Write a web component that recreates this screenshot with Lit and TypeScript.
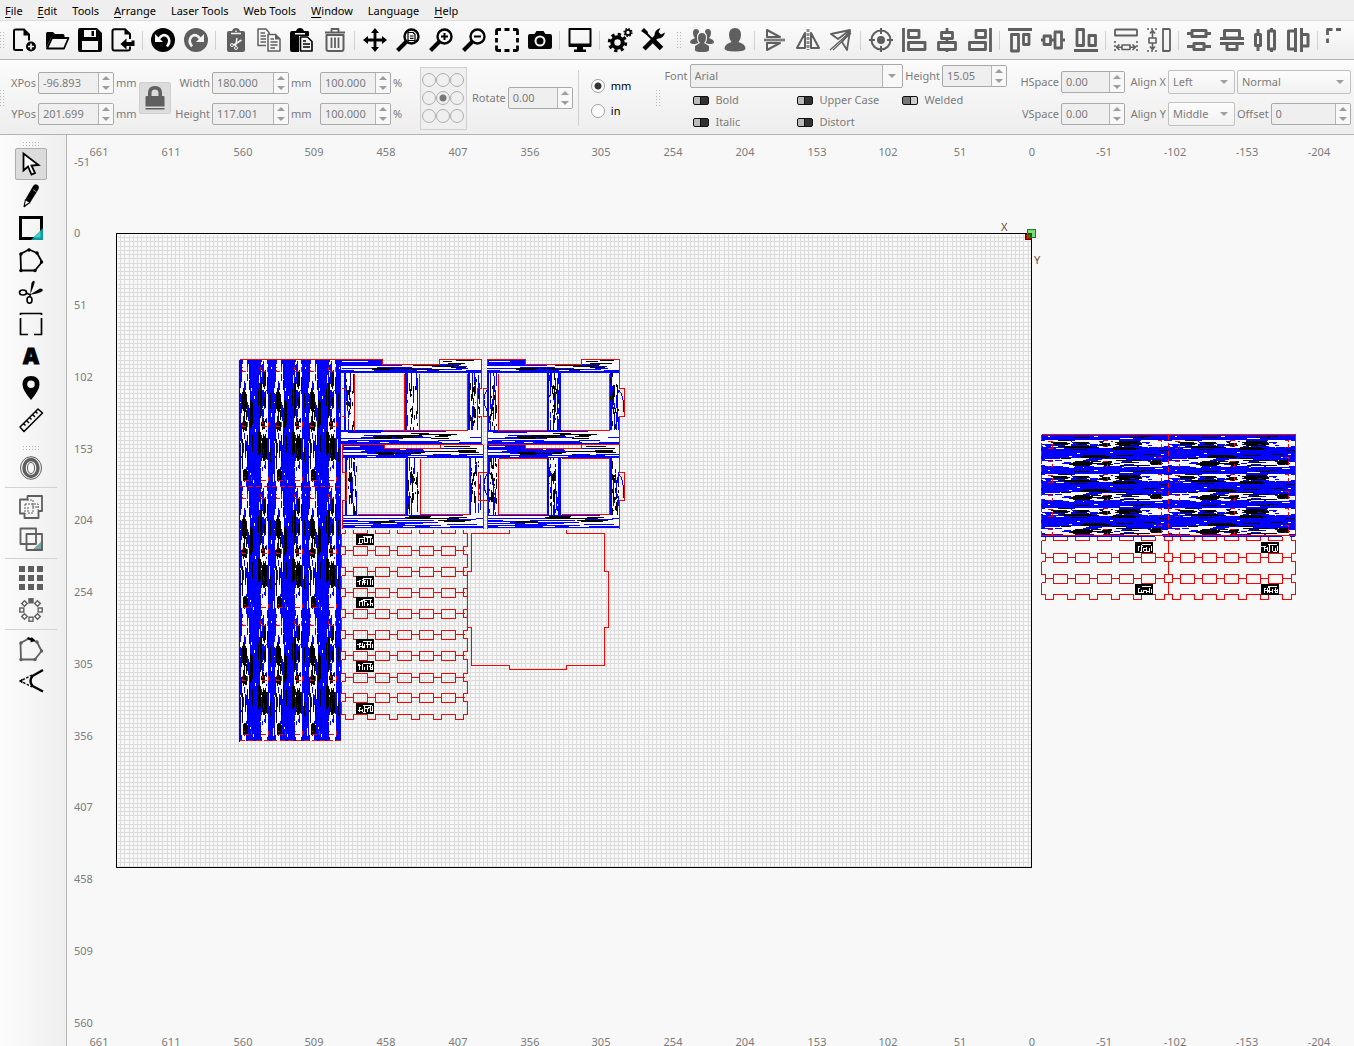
import { LitElement, html, svg, css, nothing } from "lit";
import { customElement, property } from "lit/decorators.js";

/* ---------- icons, each on a 24 x 24 grid ---------- */

const line = (d: string, w = 2) =>
  svg`<path d=${d} fill="none" stroke="currentColor" stroke-width=${w} stroke-linejoin="round"/>`;
const solid = (d: string) => svg`<path d=${d} fill="currentColor" fill-rule="evenodd"/>`;
const lens = (inner: unknown) => svg`
  <circle cx="15.5" cy="8.5" r="7" fill="none" stroke="currentColor" stroke-width="2.4"/>
  <path d="M10.5 13.5L1.5 22.5" stroke="currentColor" stroke-width="4"/>${inner}`;

const icons: Record<string, unknown> = {
  newFile: svg`${line("M11 22H3.500Q2 22 2 20.500V3Q2 1.500 3.500 1.500H12L17 6.500V12.500")}${solid("M11.500 1V7.500H18Z")}
    <circle cx="19" cy="18.500" r="5" fill="currentColor"/><path d="M19 15.500V21.500M16 18.500H22" stroke="#fff" stroke-width="1.600"/>`,
  open: svg`${solid("M1 20V5.500Q1 4 2.500 4H8L10 6H18Q19.500 6 19.500 7.500V9H6.500Z")}${line("M2 20.500L7 10H23.500L19 20.500Z", 1.8)}`,
  save: svg`${solid("M2 0H19L24 5V22Q24 24 22 24H2Q0 24 0 22V2Q0 0 2 0ZM6 2V9H18V2ZM4 13V22H20V13Z")}<rect x="13.500" y="3" width="2.500" height="5" fill="currentColor"/>`,
  importFile: svg`${line("M19 18.500V20.500Q19 22.500 17 22.500H3.500Q1.500 22.500 1.500 20.500V3Q1.500 1.200 3.500 1.200H14L19 6V11")}${solid("M13.500 1V6.500H19Z")}${solid("M9.500 16L15.500 10.500V14H20.500V12.500H23.500V18H15.500V21.500Z")}`,
  undo: svg`<circle cx="12" cy="12" r="12" fill="currentColor"/><path d="M8 10.500Q12 5 16.500 8.500Q20.500 13 16 18.500" fill="none" stroke="#fafafa" stroke-width="2.600"/><path d="M4 6V14H12Z" fill="#fafafa"/>`,
  redo: svg`<circle cx="12" cy="12" r="12" fill="currentColor"/><path d="M16 10.500Q12 5 7.500 8.500Q3.500 13 8 18.500" fill="none" stroke="#f4f4f4" stroke-width="2.600"/><path d="M20 6V14H12Z" fill="#f4f4f4"/>`,
  cut: svg`${solid("M5 3H8Q9 0 12 0Q15 0 16 3H19Q21 3 21 5V22Q21 24 19 24H5Q3 24 3 22V5Q3 3 5 3Z")}
    <path d="M7 5.500H17M12 2.500V4M13 10L11.500 18M17.500 12L9 17.500" stroke="#f4f4f4" stroke-width="1.500"/><circle cx="8" cy="17" r="1.500" fill="none" stroke="#f4f4f4"/><circle cx="12" cy="20" r="1.500" fill="none" stroke="#f4f4f4"/>`,
  copy: svg`${line("M9 17.500H1V1H9L12 4.500V7", 1.5)}${line("M11 6.500H18.500L23 11V23H11Z", 1.5)}${line("M3.500 5H8M3.500 8H9M3.500 11H9M3.500 14H9M13.500 11H17M13.500 14H20.500M13.500 17H20.500M13.500 20H18", 1.3)}${solid("M18 6V11.500H23Z")}`,
  paste: svg`${solid("M2 3H6Q7 0 10 0Q13 0 14 3H18Q19 3 19 5V8H9V24H2Q0 24 0 22V5Q0 3 2 3ZM5 5V6.500H15V5Z")}${line("M10.500 9H17.500L22 13.500V23H10.500Z", 1.6)}${line("M13 13H16M13 16H20M13 19H20", 1.4)}`,
  trash: svg`${line("M3.500 7H20.500V21Q20.500 23 18.500 23H5.500Q3.500 23 3.500 21Z", 2)}${line("M8.500 9.500V20M12 9.500V20M15.500 9.500V20", 1.8)}${line("M2 4.500H22M8.500 4V1H15.500V4", 1.8)}`,
  move: solid("M12 0L16 5H13.400V10.600H19V8L24 12L19 16V13.400H13.400V19H16L12 24L8 19H10.600V13.400H5V16L0 12L5 8V10.600H10.600V5H8Z"),
  zoomPage: lens(line("M12 4.500H17L19 6.500V12.500H12ZM14 8H17.500M14 10.300H17.500", 1.2)),
  zoomIn: lens(line("M15.500 5V12M12 8.500H19", 2)),
  zoomOut: lens(line("M12 8.500H19", 2)),
  frame: line("M1.500 7V3Q1.500 1.500 3 1.500H6M9.500 1.500H14.500M18 1.500H21Q22.500 1.500 22.500 3V7M22.500 10V14.500M22.500 17.500V21Q22.500 22.500 21 22.500H18M14.500 22.500H9.500M6 22.500H3Q1.500 22.500 1.500 21V17.500M1.500 14.500V10", 2.8),
  camera: solid("M2 6H6.500L8.500 3H15.500L17.500 6H22Q24 6 24 8V19Q24 21 22 21H2Q0 21 0 19V8Q0 6 2 6ZM12 7.500A5.500 5.500 0 1 0 12 18.500A5.500 5.500 0 1 0 12 7.500ZM12 9.500A3.500 3.500 0 1 1 12 16.500A3.500 3.500 0 1 1 12 9.500Z"),
  monitor: svg`${line("M1.500 1H22.500V18H1.500Z", 2)}${solid("M1 15.500H23V18.500H1ZM9 18H15V21.500H18V24H6V21.500H9Z")}`,
  gears: svg`<circle cx="9.500" cy="14.500" r="5.200" fill="none" stroke="currentColor" stroke-width="4"/><circle cx="9.500" cy="14.500" r="8.200" fill="none" stroke="currentColor" stroke-width="3" stroke-dasharray="3.200 3.240"/>
    <circle cx="20" cy="4.500" r="2.600" fill="none" stroke="currentColor" stroke-width="1.800"/><circle cx="20" cy="4.500" r="3.900" fill="none" stroke="currentColor" stroke-width="1.400" stroke-dasharray="1.500 1.560"/>`,
  tools: svg`${line("M3.500 3.500L12 12", 2)}${line("M13 13L20.500 20.500", 5)}${line("M3 21L17 7", 4.5)}${solid("M0 3L3 0L7 4L6 7Z")}${solid("M13.500 8Q13 2 19.500 0L17.500 4L20 6.500L24 4.500Q22.500 11 16 10.500Z")}`,
  group: svg`${solid("M12 5Q16 5 16 10Q16 13 14 15L19 18V22Q19 24 12 24Q5 24 5 22V18L10 15Q8 13 8 10Q8 5 12 5Z")}${solid("M6 1Q9 1 9 4Q7 6 7 10Q7 13 8.500 15L5 16Q0 16 0 14L1 12L5 10Q3 8 3 5Q3 1 6 1Z")}${solid("M18 1Q15 1 15 4Q17 6 17 10Q17 13 15.500 15L19 16Q24 16 24 14L23 12L19 10Q21 8 21 5Q21 1 18 1Z")}`,
  person: solid("M12 0Q18 0 18 7Q18 11 15.500 14Q22.500 16 22.500 20.500Q22.500 23.500 12 23.500Q1.500 23.500 1.500 20.500Q1.500 16 8.500 14Q6 11 6 7Q6 0 12 0Z"),
  flipV: svg`${line("M4 2V9L17 9ZM4 15V22L17 15Z", 2)}<path d="M1 12H22" stroke="currentColor" stroke-width="3" stroke-opacity="0.600"/>${line("M1 12H22", 1)}`,
  flipH: svg`${line("M9 5V20H1ZM15 5V20H23Z", 2)}<path d="M12 1V22" stroke="currentColor" stroke-width="3" stroke-opacity="0.700" stroke-dasharray="3 1"/>`,
  flipD: svg`${line("M21 2L2 6L9 11ZM21 3L18 22L13 14Z", 1.8)}${line("M1 22L20 5M4 22L22 5", 1.2)}`,
  target: svg`<circle cx="12" cy="12" r="9.500" fill="none" stroke="currentColor" stroke-width="2"/><circle cx="12" cy="12" r="4" fill="currentColor"/>${line("M12 0V6M12 18V24M0 12H6M18 12H24", 2)}`,
  alignL: line("M1.500 0V24M6.500 2.500H17V9.500H6.500ZM6.500 14.500H23V21.500H6.500Z", 2.8),
  alignC: line("M12 0V4M12 11V14M12 22V24M6.500 4.500H17.500V10.500H6.500ZM3.500 14.500H20.500V21.500H3.500Z", 2.8),
  alignR: line("M22.500 0V24M17.500 2.500H8V9.500H17.500ZM17.500 14.500H1.500V21.500H17.500Z", 2.8),
  alignT: line("M0 1.500H24M3.500 6.500H10.500V23H3.500ZM15.500 6.500H21V16.500H15.500Z", 2.8),
  alignM: line("M0 12H3M10 12H14M21 12H24M3 8H9.500V16.500H3ZM14 4H20.500V20H14Z", 2.8),
  alignB: line("M0 22.500H24M3 1.500H9.500V17.500H3ZM15 7.500H21.500V17.500H15Z", 2.8),
  sameW: svg`${line("M2 1.500H22Q23 1.500 23 2.500V7.500H1V2.500Q1 1.500 2 1.500Z", 1.8)}${line("M8 17H16V21.500H8ZM3 19.200H8M16 19.200H21M5.500 16.500L2.500 19.200L5.500 22M18.500 16.500L21.500 19.200L18.500 22", 1.6)}<path d="M1 13V24M23 13V24" stroke="currentColor" stroke-width="1.600" stroke-dasharray="2 2"/>`,
  sameH: svg`${line("M16 1H22Q23 1 23 2V22Q23 23 22 23H16Z", 1.8)}${line("M2 10H9V15H2ZM5.500 3V10M5.500 15V21M3 5.500L5.500 2.500L8 5.500M3 18.500L5.500 21.500L8 18.500", 1.6)}<path d="M0 1H11M0 23H11" stroke="currentColor" stroke-width="1.600" stroke-dasharray="2 2"/>`,
  distV: line("M5 2.500H19V8.500H5ZM7 15.500H17V21.500H7ZM0 5.500H5M19 5.500H24M0 18.500H7M17 18.500H24", 3),
  distV2: line("M4.500 2.500H19.500V10H4.500ZM7 16V21.500H17V16M0 10.500H24M0 15.500H24", 3),
  distH: line("M2.500 6.500H7.500V17.500H2.500ZM15.500 3H21.500V21H15.500ZM5 1V6M5 17V23M18.500 0V3M18.500 21V24", 3),
  distH2: line("M9 3H2.500V21H9M16 6.500H22V18H16M9.500 0V24M15.500 0V24", 3),
  corners: line("M1.500 15V10.500M1.500 7V1.500H6.500M10 1.500H15", 2.8),
  lock: solid("M5 10V7Q5 0 12 0Q19 0 19 7V10H20.500Q21.500 10 21.500 11V20.500H2.500V11Q2.500 10 3.500 10ZM8.500 10H15.500V7Q15.500 3.500 12 3.500Q8.500 3.500 8.500 7ZM2.500 22H21.500V23.500H2.500Z"),
  select: svg`<path d="M4.500 1.500V18.500L9 14.500L12.500 22.500L16 21L12.500 13.500L19.500 13Z" fill="#fff" stroke="currentColor" stroke-width="1.800"/>`,
  pencil: svg`${solid("M13.500 3Q15.500 -1 18.500 1Q21 2.500 19 6L11 19L6 16Z")}${line("M6.500 15.500L5 22.500L11 18.500", 1.1)}${solid("M5 20V23.500L7.500 21.500Z")}<path d="M14 5.500L17.500 8" stroke="#999" stroke-width="1"/>`,
  rect: svg`<path d="M1.500 1.500H22.500V22.500H1.500Z" fill="none" stroke="currentColor" stroke-width="3"/><path d="M24 12V24H12Z" fill="#0c9c9c"/><path d="M21.500 15V21.500H15Z" fill="#45cfcb"/>`,
  polygon: svg`${line("M1.500 6L10 1.500L18 5L23 14L16 22.500H2Z", 1.8)}${[[2,6],[10,2],[18,5],[22.500,14],[16,22.500],[2,22.500]].map(([x,y]) => svg`<circle cx=${x} cy=${y} r="1.700" fill="currentColor"/>`)}`,
  scissors: svg`${solid("M11 15L12.500 3Q14 0 15.500 1Q16 2 15 5ZM12 14L21 8.500Q24.500 8.500 23.500 11Q20 13.500 12 14.500Z")}<ellipse cx="4" cy="12.500" rx="3.500" ry="2.500" fill="none" stroke="currentColor" stroke-width="1.600"/><ellipse cx="10.500" cy="20" rx="2.500" ry="3.200" fill="none" stroke="currentColor" stroke-width="1.600"/>${line("M7 13L12 15M11 17V14", 1.6)}`,
  brackets: line("M1 1.500H23M1.500 6V22.500H9M22.500 6V22.500H15M1.500 1V3M22.500 1V3", 1.7),
  letter: svg`<text x="12" y="20" text-anchor="middle" font-family="Open Sans, sans-serif" font-size="22" font-weight="900" stroke="currentColor" stroke-width="1">A</text>`,
  pin: solid("M12 0Q20.500 0 20.500 8.500Q20.500 14 12 24Q3.500 14 3.500 8.500Q3.500 0 12 0ZM12 4.500A3.700 3.700 0 1 0 12 12A3.700 3.700 0 1 0 12 4.500Z"),
  ruler: line("M1 19L19 1L23.500 5L5 23.500ZM5 16L6.500 17.500M8 13L10 15M11 10L12.500 11.500M14 7L16 9M17 4L18.500 5.500", 1.5),
  offset: svg`<ellipse cx="12" cy="12" rx="10.500" ry="11.300" fill="none" stroke="currentColor"/><ellipse cx="12" cy="12" rx="7" ry="8.500" fill="none" stroke="currentColor" stroke-width="3.400"/><ellipse cx="12" cy="12" rx="3.600" ry="5.600" fill="none" stroke="currentColor" stroke-width="1"/>`,
  weld: svg`${line("M8.500 1H23V16H19.500V23H5.500V18.500H1V4.500H8.500Z", 1.8)}<path d="M8 5H14V12H20M6 9H19V15M6 9V19M9 12V18H14V10" fill="none" stroke="currentColor" stroke-width="1" stroke-dasharray="2 1"/>`,
  boolean: svg`<path d="M24 13V24H12Z" fill="#79a5a5"/>${line("M1.500 1.500H17V17H1.500ZM7.500 7H23V23H7.500Z", 1.8)}`,
  grid: solid("M0 0H6V6H0ZM9 0H15V6H9ZM18 0H24V6H18ZM0 9H6V15H0ZM9 9H15V15H9ZM18 9H24V15H18ZM0 18H6V24H0ZM9 18H15V24H9ZM18 18H24V24H18Z"),
  circular: svg`${[0,45,90,135,180,225,270,315].map(a => svg`<rect x="10" y="0.800" width="4" height="4" fill=${a ? "none" : "currentColor"} stroke="currentColor" stroke-width="1.400" transform=${`rotate(${a} 12 12)`}/>`)}`,
  nodes: svg`${line("M1.500 6L9 2L18 5L22.500 14L16 22.500H2Z", 1.8)}${[[2,6],[18,5],[22.500,14],[16,22.500],[2,22.500]].map(([x,y]) => svg`<circle cx=${x} cy=${y} r="1.700" fill="currentColor"/>`)}<path d="M8.500 1L13 2.500" stroke="#000" stroke-width="2"/><path d="M12.500 0L16.500 3.500L11.500 5.500Z" fill="#000"/>`,
  radius: svg`${line("M24 1L13.500 7Q9.500 12 13.500 17L24 22.500", 2.4)}<path d="M13 6L1.500 12L13 18" fill="none" stroke="currentColor" stroke-width="1.400" stroke-dasharray="2.500 1.500"/>${solid("M0 12L3.500 9.500V14.500Z")}`,
};

const icon = (name: string) => html`<svg class="icon" viewBox="0 0 24 24" aria-hidden="true">${icons[name]}</svg>`;

/* ---------- engraving texture ---------- */

const PAPER = 0, BLUE = 1, BLACK = 2;
const TONES = ["#fafafa", "#0000ff", "#000000"];

/** A small raster of wood grain that runs along x and is drawn as one path per tone. */
class Grain {
  cells: Uint8Array;
  private state: number;
  constructor(readonly w: number, readonly h: number, base: number, seed: number) {
    this.cells = new Uint8Array(w * h).fill(base);
    this.state = seed;
  }
  random() {
    this.state = (this.state * 1664525 + 1013904223) >>> 0;
    return this.state / 4294967296;
  }
  run(tone: number, x0: number, x1: number, y: number) {
    if (y < 0 || y >= this.h) return this;
    const from = Math.max(0, Math.round(x0)), to = Math.min(this.w, Math.round(x1));
    for (let x = from; x < to; x++) this.cells[Math.floor(y) * this.w + x] = tone;
    return this;
  }
  band(tone: number, x0: number, x1: number, y0: number, y1: number) {
    for (let y = y0; y < y1; y++) this.run(tone, x0 - this.random() * 6, x1 + this.random() * 8, y);
    return this;
  }
  knot(tone: number, cx: number, cy: number, rx: number, ry: number) {
    for (let y = Math.ceil(cy - ry); y <= cy + ry; y++) {
      const half = rx * Math.sqrt(Math.max(0, 1 - ((y - cy) / (ry + 0.5)) ** 2));
      this.run(tone, cx - half - this.random() * 4, cx + half + this.random() * 4, y);
    }
    return this;
  }
  streaks(tone: number, count: number, min: number, max: number, x0 = 0, x1 = this.w, y0 = 0, y1 = this.h) {
    for (let i = 0; i < count; i++) {
      const x = x0 + this.random() * (x1 - x0), len = min + this.random() * (max - min);
      this.run(tone, x - len / 2, x + len / 2, y0 + Math.floor(this.random() * (y1 - y0)));
    }
    return this;
  }
  draw(turned = false) {
    return TONES.map((fill, tone) => {
      let d = "";
      for (let y = 0; y < this.h; y++) {
        for (let x = 0; x < this.w; x++) {
          if (this.cells[y * this.w + x] !== tone) continue;
          const start = x;
          while (x < this.w && this.cells[y * this.w + x] === tone) x++;
          const n = x - start;
          d += turned ? `M${this.h - 1 - y} ${start}h1v${n}h-1z` : `M${start} ${y}h${n}v1h-${n}z`;
        }
      }
      return svg`<path d=${d} fill=${fill}/>`;
    });
  }
}

const tile = (() => {
  const g = new Grain(127, 34, BLUE, 77);
  const paper = [[14,8,17,3],[66,8,14,3],[112,8,17,3],[46,6,12,1],[64,11,20,1],[14,27,18,3],[42,29,22,3],[72,27,18,3],[106,28,22,3],[30,24,12,1]];
  const black = [[19,8,7,1],[42,8,4,1],[87,8,11,2],[82,13,12,1],[64,9,3,2],[54,21,14,1],[40,28,9,2],[66,28,4,2],[115,27,4,2],[94,30,12,0],[34,11,14,0],[46,12,12,0],[92,25,14,0]];
  paper.forEach(([x, y, rx, ry]) => g.knot(PAPER, x, y, rx, ry));
  g.streaks(BLUE, 18, 4, 20, 0, 127, 4, 12).streaks(BLUE, 22, 4, 20, 0, 127, 24, 33);
  g.streaks(BLACK, 16, 4, 14).streaks(PAPER, 22, 3, 14);
  g.band(BLUE, 0, 40, 14, 20).band(BLUE, 86, 127, 16, 22).band(BLUE, 0, 127, 0, 2);
  black.forEach(([x, y, rx, ry]) => g.knot(BLACK, x, y, rx, ry));
  g.streaks(PAPER, 24, 1, 4, 8, 122).streaks(BLUE, 16, 1, 5, 30, 110).streaks(BLACK, 12, 6, 18, 20, 110);
  return g;
})();

const tileTabs = (turned: boolean) => {
  const tabs = [[6,6,5,7],[61,5,5,6],[116,5,4,7],[6,26,5,5],[61,26,5,5],[116,22,4,7]];
  const d = tabs.map(([x, y, w, h]) =>
    turned ? `M${34 - y} ${x}v${w}h-${h}v-${w}` : `M${x} ${y}h${w}v${h}h-${w}`).join("");
  return svg`<path class="cut" stroke-dasharray="5 2" transform="translate(0.5 0.5)" d=${d}/>`;
};

const beam = (w: number, h: number, seed: number) => {
  const g = new Grain(w, h, PAPER, seed);
  g.streaks(BLUE, 9, 30, 70, 0, w * 0.6, 0, h - 3).streaks(BLUE, 5, 16, 40, 0, w, 1, h - 2);
  g.streaks(BLACK, 8, 8, 28, w * 0.4, w * 0.9, 0, h * 0.6).streaks(BLACK, 3, 10, 30, w * 0.3, w * 0.8, h * 0.5, h);
  g.run(BLUE, 0, w, h - 1).run(BLUE, 0, w, h - 2).run(BLUE, 0, w * 0.7, h - 3).run(BLUE, 0, w * 0.85, 0);
  g.knot(BLACK, w * 0.3, h * 0.5, 8, 1);
  g.streaks(BLUE, 3, 10, 30, w * 0.4, w, h - 5, h - 2).streaks(PAPER, 3, 6, 22, 0, w, h - 3, h - 1);
  return g.draw();
};

const post = (w: number, h: number, seed: number, dense = false) => {
  const g = new Grain(h, w, PAPER, seed);
  g.streaks(BLUE, dense ? 24 : 13, 6, 26).streaks(BLACK, 16, 2, 9);
  g.run(BLUE, 0, h, w - 1).run(BLUE, 0, h, w - 2);
  if (dense) g.run(BLUE, 0, h, 0).run(BLUE, 0, h, 1).run(BLUE, 0, h, 2);
  g.knot(BLACK, h * 0.34, w * 0.5, 4, 1).knot(BLACK, h * 0.68, w * 0.45, 3, 1);
  g.streaks(PAPER, 12, 2, 7, h * 0.1, h * 0.9, 2, w - 2).streaks(BLACK, 8, 1, 4);
  return g.draw(true);
};

const at = (x: number, y: number, content: unknown) => svg`<g transform=${`translate(${x} ${y})`}>${content}</g>`;

const chip = (x: number, y: number, seed: number) => {
  const g = new Grain(18, 11, BLACK, seed);
  g.run(PAPER, 7, 16, 2).run(PAPER, 3, 5, 4);
  for (const cx of [3, 6, 8, 11, 14, 16]) {
    const top = 3 + Math.floor(g.random() * 4);
    for (let r = top; r < 9; r++) g.run(PAPER, cx, cx + 1, r);
  }
  g.streaks(PAPER, 5, 2, 4, 2, 16, 3, 10);
  return at(x, y, g.draw());
};

/** Finger-jointed strips: slots on each seam, a crenellated edge at top and bottom. */
const strips = (x: number, w: number, top: number, seams: number[], bottom: number) => {
  const slots = [12, 34, 56, 78, 100];
  let d = `M${x + 4} ${top - 4}V${top}H${x}M${x + w - 4} ${top - 4}V${top}H${x + w}`;
  for (const s of slots) d += `M${x + s} ${top - 4}v4h14v-4`;
  let above = top;
  for (const y of seams) {
    d += `M${x} ${y - 4}h4v8h-4M${x + w} ${y - 4}h-4v8h4M${x + 4} ${y}h8M${x + 114} ${y}h9`;
    d += `M${x} ${above}V${y - 4}M${x + w} ${above}V${y - 4}`;
    slots.forEach((s, i) => {
      d += `M${x + s} ${y - 4}h14v9h-14z`;
      if (i < 4) d += `M${x + s + 14} ${y}h8`;
    });
    above = y + 4;
  }
  d += `M${x} ${above}V${bottom - 5}M${x + w} ${above}V${bottom - 5}h-4v5h-9`;
  for (const s of [...slots].reverse()) d += `M${x + s + 22 > x + w - 5 ? x + w - 13 : x + s + 22} ${bottom}H${x + s + 14}v-5h-14v5`;
  d += `H${x + 4}v-5h-4`;
  return d;
};

const FRAME_CUTS = [
  "M340 359H382V364H439V359H481V388H477V416H481V444",
  "M341 388H345V416H341M354 373V430M404 373V430H419V373M467 373V430M382 430H404M419 430H467",
  "M341 444H482M384 444V448H440V444M342 444V472H346V500H342V528M483 444V472H478V500H483V528",
  "M357 514H405V458M420 458V514H469V458",
  "M487 364V359H525V364H581V359H619V388H624V416H619V444H487V416H483V388H487",
  "M498 373V430H546M561 430H609V373M619 444V472H624V500H619V528M525 444V448H581V444",
  "M498 458H546M498 458V514H546M561 458H609V514H561M487 448V472H483V500H487V528",
  "M509 529V533H471V571H467V627H471V665H509V669H566V665H604V627H608V571H604V533H566V529",
].join("");

const GRAIN_LOOPS = "M487 390Q480 400 489 414M619 390Q614 400 618 412M619 390Q625 398 623 412M487 474Q480 486 489 498M619 474Q614 486 618 498M619 474Q625 482 623 498";

const RULER_X = [661, 611, 560, 509, 458, 407, 356, 305, 254, 204, 153, 102, 51, 0, -51, -102, -153, -204];
const RULER_Y = [-51, 0, 51, 102, 153, 204, 254, 305, 356, 407, 458, 509, 560];
const STEP = 71.75;

@customElement("work-area")
export class WorkArea extends LitElement {
  static styles = css`
    :host { display: block; flex: 1; min-width: 0; background: #f8f8f8; overflow: hidden; }
    .sheet { display: block; width: 100%; height: 100%; }
    .crisp { shape-rendering: crispEdges; }
    .cut { fill: none; stroke: #f00; stroke-width: 1; }
    .label { font: 11px "Noto Sans", sans-serif; fill: #7c7c7c; }
    .axis { font: 11px "Noto Sans", sans-serif; fill: #6c4a4a; }
    .middle { text-anchor: middle; }
  `;

  private grid() {
    let d = "";
    for (let i = 1; 116 + i * 4.22 < 1031; i++) d += `M${Math.round(116 + i * 4.22)} 234v633`;
    for (let i = 1; 233 + i * 4.22 < 867; i++) d += `M117 ${Math.round(233 + i * 4.22)}h914`;
    return svg`<path d=${d} transform="translate(0.5 0.5)" fill="none" stroke="#dcdcdc"/>`;
  }

  private frames() {
    const beams = [
      [340, 364, 142, 9], [340, 430, 142, 14], [342, 448, 142, 10], [342, 515, 142, 13],
      [487, 364, 133, 9], [487, 430, 133, 14], [487, 448, 133, 10], [487, 515, 133, 13],
    ];
    const posts = [
      [344, 373, 11], [405, 373, 13], [468, 373, 12], [487, 373, 10], [547, 373, 14], [610, 373, 9],
      [345, 458, 12], [406, 458, 13], [469, 458, 12], [487, 458, 10], [547, 458, 14], [610, 458, 9],
    ];
    return svg`
      <path d="M340 359H382V364H340ZM487 359H525V364H487ZM342 444H384V448H342ZM487 444H525V448H487Z" fill="#00f"/>
      <path d="M342 361H368V362H342ZM489 361H510V362H489ZM344 446H360V447H344ZM489 446H505V447H489Z" fill="#fff"/>
      <path d="M439 359H481V364H439ZM581 359H619V364H581ZM440 444H482V448H440ZM581 444H619V448H581Z" fill="#fafafa"/>
      <path d="M443 361H452V362H443ZM448 363H465V364H448ZM456 360H474V361H456ZM586 361H598V362H586ZM590 363H612V364H590ZM444 446H470V447H444ZM586 446H606V447H586ZM600 360H614V361H600Z" fill="#000"/>
      ${beams.map(([x, y, w, h], i) => at(x, y, beam(w, h, 901 + (i % 4) * 37)))}
      ${posts.map(([x, y, w], i) => at(x, y, post(w, 57, 311 + i * 53, w === 14)))}
      <path d=${GRAIN_LOOPS} fill="none" stroke="#00f"/>`;
  }

  render() {
    const columns = [239, 273, 307];
    const rows = [360, 487, 614];
    return html`<svg class="sheet" role="img" aria-label="Work area">
      <defs>
        <g id="plank">${tile.draw()}${tileTabs(false)}</g>
        <g id="plank-turned">${tile.draw(true)}${tileTabs(true)}</g>
      </defs>
      <g transform="translate(-67 -135)">
        <g class="crisp">
          ${this.grid()}
          <rect x="116.5" y="233.5" width="915" height="634" fill="none" stroke="#000"/>
          ${columns.map(x => rows.map(y => svg`<use href="#plank-turned" x=${x} y=${y}/>`))}
          ${[1041, 1168].map(x => [435, 469, 503].map(y => svg`<use href="#plank" x=${x} y=${y}/>`))}
          ${this.frames()}
          <g transform="translate(0.5 0.5)">
            <path class="cut" d=${FRAME_CUTS}/>
            <path class="cut" d=${strips(341, 126, 533, [550, 571, 592, 613, 634, 655, 677, 697], 719)}/>
            <path class="cut" d=${strips(1041, 127, 540, [557, 578], 599) + strips(1168, 127, 540, [557, 578], 599)}/>
            <path class="cut" d="M1041 434H1295V535H1041M239 359H340M471 533H509M566 533H604"/>
            <path class="cut" stroke-dasharray="5 3" d="M1041 434V536M1168 434V536M239 740H340M239 486H340"/>
            <path d="M239 360V741M340 360V739" stroke="#00f"/>
          </g>
          ${[534, 576, 597, 639, 661, 703].map((y, i) => chip(356, y, 40 + i * 9))}
          ${[1135, 1261].map(x => [542, 584].map((y, i) => chip(x, y, x + i * 7)))}
          <rect x="1025.5" y="234.5" width="5" height="5" fill="#c00" stroke="#700"/>
          <rect x="1027.5" y="229.5" width="8" height="8" fill="#0b0" fill-opacity="0.5" stroke="#207a20"/>
        </g>
        <text class="axis" x="1001" y="231">X</text>
        <text class="axis" x="1034" y="264">Y</text>
        ${RULER_X.map((v, i) => svg`
          <text class="label middle" x=${Math.round(99 + i * STEP)} y="156">${v}</text>
          <text class="label middle" x=${Math.round(99 + i * STEP)} y="1046">${v}</text>`)}
        ${RULER_Y.map((v, i) => svg`<text class="label" x="74" y=${Math.floor(166 + i * STEP)}>${v}</text>`)}
      </g>
    </svg>`;
  }
}

/* ---------- number box ---------- */

@customElement("number-box")
export class NumberBox extends LitElement {
  @property() label = "";
  @property() value = "";
  @property() unit = "";
  static styles = css`
    :host { display: flex; align-items: center; gap: 2px; }
    label { flex: 1; text-align: right; white-space: nowrap; }
    .box { display: flex; box-sizing: border-box; width: var(--box, 76px); height: 22px; border: 1px solid #a9a9a9; border-radius: 2px; overflow: hidden; background: #efefef; }
    input { flex: 1; min-width: 0; border: 0; padding: 0 4px; background: none; color: #7b7b7b; font: inherit; outline: none; }
    .steps { display: flex; flex-direction: column; width: 14px; border-left: 1px solid #b4b4b4; background: #f8f8f8; }
    button { flex: 1; display: grid; place-items: center; border: 0; padding: 0; background: none; }
    svg { width: 8px; height: 4px; fill: #9d9d9d; }
    .unit { width: var(--unit, 22px); box-sizing: border-box; }
  `;
  render() {
    return html`
      <label for="field">${this.label}</label>
      <span class="box">
        <input id="field" .value=${this.value} aria-label=${this.label || "Scale"}>
        <span class="steps">
          <button aria-label="Increase"><svg viewBox="0 0 8 4"><path d="M0 4L4 0L8 4Z"/></svg></button>
          <button aria-label="Decrease"><svg viewBox="0 0 8 4"><path d="M0 0L4 4L8 0Z"/></svg></button>
        </span>
      </span>
      ${this.unit ? html`<span class="unit">${this.unit}</span>` : nothing}`;
  }
}

/* ---------- application ---------- */

const MENUS = [["F", "ile"], ["E", "dit"], ["", "Tools"], ["A", "rrange"], ["", "Laser Tools"], ["", "Web Tools"], ["W", "indow"], ["", "Language"], ["H", "elp"]];

const TOOLBAR: Array<[string, string, boolean?] | "|" | "::"> = [
  ["newFile", "New"], ["open", "Open"], ["save", "Save"], ["importFile", "Import"], "|",
  ["undo", "Undo"], ["redo", "Redo", true], "|",
  ["cut", "Cut", true], ["copy", "Copy", true], ["paste", "Paste"], ["trash", "Delete", true], "|",
  ["move", "Pan"], ["zoomPage", "Zoom to page"], ["zoomIn", "Zoom in"], ["zoomOut", "Zoom out"], ["frame", "Frame selection"], ["camera", "Camera"], "|",
  ["monitor", "Preview"], "|", ["gears", "Settings"], ["tools", "Device settings"], "::",
  ["group", "Group", true], ["person", "Ungroup", true], "|",
  ["flipV", "Flip vertical", true], ["flipH", "Flip horizontal", true], ["flipD", "Mirror across line", true], "|",
  ["target", "Centre", true], ["alignL", "Align left", true], ["alignC", "Align centre", true], ["alignR", "Align right", true], "|",
  ["alignT", "Align top", true], ["alignM", "Align middle", true], ["alignB", "Align bottom", true], "|",
  ["sameW", "Same width", true], ["sameH", "Same height", true], "|",
  ["distV", "Distribute vertically", true], ["distV2", "Space vertically", true], ["distH", "Distribute horizontally", true], ["distH2", "Space horizontally", true], "|",
  ["corners", "Move to corner", true],
];

const TOOLS: Array<[string, string, boolean?] | "|" | "::"> = [
  "::", ["select", "Select"], ["pencil", "Draw lines"], ["rect", "Rectangle"], ["polygon", "Polygon"], ["scissors", "Trim"], ["brackets", "Tabs"], ["letter", "Text"], ["pin", "Position laser"], ["ruler", "Measure"],
  "::", ["offset", "Offset", true], "|", ["weld", "Weld", true], ["boolean", "Boolean", true], "|", ["grid", "Grid array", true], ["circular", "Circular array", true], "|", ["nodes", "Edit nodes", true], ["radius", "Radius"],
];

@customElement("app-root")
export class AppRoot extends LitElement {
  static styles = css`
    :host { display: flex; flex-direction: column; min-height: 100vh; background: #f8f8f8; color: #7b7b7b; font: 11px/16px "Noto Sans", sans-serif; overflow: hidden; }
    .icon { width: 24px; height: 24px; display: block; fill: currentColor; overflow: visible; }
    button { font: inherit; }
    .menu { display: flex; gap: 15px; height: 20px; padding: 0 5px; background: #efefef; }
    .menu button { border: 0; padding: 0; background: none; color: #000; line-height: 22px; }
    .menu u { text-underline-offset: 2px; }
    .bar { display: flex; align-items: center; height: 38px; border-top: 1px solid #dcdcdc; border-bottom: 1px solid #b4b4b4; background: linear-gradient(#fcfcfc, #eeeeee); overflow: hidden; }
    .tool { flex: none; display: grid; place-items: center; width: 33px; height: 32px; border: 0; padding: 0; background: none; color: #000; }
    .dim { color: #5f5f5f; }
    .rule { flex: none; width: 7px; height: 19px; display: flex; justify-content: center; }
    .rule::before { content: ""; width: 1px; background: #d2d2d2; }
    .dots { flex: none; width: 4px; height: 16px; background: conic-gradient(at 1px 1px, transparent 270deg, #b8b8b8 0) 0 0 / 3px 3px; }
    .bar .dots { margin: 0 4px 0 8px; }
    .bar .dots.first { margin: 0 3px 0 0; }
    .props { display: flex; align-items: center; box-sizing: border-box; height: 75px; padding-top: 2px; border-bottom: 1px solid #b4b4b4; background: linear-gradient(#fbfbfb, #eeeeee); }
    .props > .dots.first { margin-right: 6px; }
    .size { display: grid; grid-template-columns: 128px 33px 142px 91px; row-gap: 9px; }
    .lock { grid-column: 2; grid-row: 1 / 3; align-self: center; justify-self: end; width: 32px; height: 32px; display: grid; place-items: center; border: 1px solid #d0d0d0; border-radius: 2px; background: #dcdcdc; color: #5f5f5f; padding: 0; }
    .size .w { --box: 77px; }
    .size .s { --box: 71px; --unit: 11px; }
    .anchor { display: grid; grid-template-columns: repeat(3, 14px); grid-auto-rows: 18px; align-items: center; margin: 0 5px 0 16px; padding: 3px 2px 4px 1px; border: 1px solid #d0d0d0; background: #efefef; }
    input[type="radio"] { appearance: none; box-sizing: border-box; width: 14px; height: 14px; margin: 0; border: 1px solid #a0a0a0; border-radius: 50%; background: #fff; }
    .anchor input { background: none; border-color: #adadad; }
    input[type="radio"]:checked { background: radial-gradient(circle, #333 3px, transparent 4px) #fff; }
    .anchor input:checked { background: radial-gradient(circle, #777 3px, transparent 4px); }
    .rotate { --box: 65px; }
    .divider { width: 1px; height: 56px; margin: 0 12px 0 5px; background: #cfcfcf; }
    .units { display: flex; flex-direction: column; gap: 9px; color: #000; }
    .units label { display: flex; align-items: center; gap: 6px; }
    .props > .dots.second { margin: 0 4px 0 25px; }
    .text { flex: 1; align-self: flex-start; padding-top: 2px; min-width: 0; }
    .row { display: flex; align-items: center; gap: 2px; }
    .row number-box { --box: 65px; }
    .pick { position: relative; display: flex; }
    .pick select { appearance: none; width: 100%; box-sizing: border-box; height: 24px; border: 1px solid #c0c0c0; border-radius: 2px; background: linear-gradient(#fcfcfc, #f1f1f1); color: #7b7b7b; font: inherit; padding: 0 4px; }
    .pick svg { position: absolute; right: 7px; top: 10px; width: 8px; height: 4px; fill: #9d9d9d; pointer-events: none; }
    .family { flex: 1; }
    .family select { background: linear-gradient(90deg, #efefef calc(100% - 20px), #b4b4b4 calc(100% - 20px), #b4b4b4 calc(100% - 19px), #f8f8f8 calc(100% - 19px)); border-color: #a9a9a9; }
    .flags { display: grid; grid-template-columns: 104px 105px 1fr; grid-auto-rows: 22px; align-items: center; padding: 1px 0 0 29px; }
    .flags label { display: flex; align-items: center; gap: 6px; }
    .flags input { appearance: none; margin: 0; box-sizing: border-box; width: 16px; height: 9px; border: 1px solid #111; border-radius: 2px; background: linear-gradient(90deg, #bbb 6px, #111 6px, #111 7px, #333 7px); }
    .flags input:checked { background: linear-gradient(90deg, #777 7px, #111 7px, #111 8px, #ccc 8px); }
    .spacing { display: grid; grid-template-columns: 107px 39px 67px 114px; column-gap: 2px; row-gap: 8px; align-items: center; margin: 0 3px 0 11px; }
    .spacing > label { text-align: right; }
    .spacing number-box { --box: 64px; }
    .spacing .last { --box: 81px; }
    .main { flex: 1; display: flex; min-height: 0; }
    .side { flex: none; box-sizing: border-box; width: 67px; padding-right: 5px; border-right: 1px solid #b4b4b4; background: linear-gradient(90deg, #fcfcfc, #eeeeee); display: flex; flex-direction: column; align-items: center; }
    .side .tool { box-sizing: border-box; width: 32px; border: 1px solid transparent; border-radius: 2px; }
    .side .tool.on { border-color: #adadad; background: #dcdcdc; }
    .side .rule { width: 52px; height: 7px; align-items: center; }
    .side .rule::before { width: 52px; height: 1px; }
    .side .dots { width: 16px; height: 4px; margin: 10px 0 2px; }
    .side .dots.first { margin: 7px 0 2px; }
  `;

  private strip(items: typeof TOOLBAR, active = "") {
    return items.map((item, i) =>
      item === "|" ? html`<span class="rule"></span>`
      : item === "::" ? html`<span class="dots ${i === 0 ? "first" : ""}"></span>`
      : html`<button class="tool ${item[2] ? "dim" : ""} ${item[0] === active ? "on" : ""}" title=${item[1]} aria-label=${item[1]}>${icon(item[0])}</button>`);
  }

  private pick(id: string, options: string[], cls = "") {
    return html`<span class="pick ${cls}"><select id=${id} aria-label=${id}>${options.map(o => html`<option>${o}</option>`)}</select>
      <svg viewBox="0 0 8 4"><path d="M0 0L4 4L8 0Z"/></svg></span>`;
  }

  private flag(text: string, on = false) {
    return html`<label><input type="checkbox" .checked=${on}>${text}</label>`;
  }

  render() {
    return html`
      <nav class="menu">${MENUS.map(([key, rest]) => html`<button>${key ? html`<u>${key}</u>` : nothing}${rest}</button>`)}</nav>
      <div class="bar"><span class="dots first"></span>${this.strip(TOOLBAR)}</div>
      <div class="props">
        <span class="dots first"></span>
        <div class="size">
          <number-box label="XPos" value="-96.893" unit="mm"></number-box>
          <button class="lock" aria-label="Lock aspect ratio">${icon("lock")}</button>
          <number-box class="w" label="Width" value="180.000" unit="mm"></number-box>
          <number-box class="s" value="100.000" unit="%"></number-box>
          <number-box label="YPos" value="201.699" unit="mm"></number-box>
          <number-box class="w" label="Height" value="117.001" unit="mm"></number-box>
          <number-box class="s" value="100.000" unit="%"></number-box>
        </div>
        <div class="anchor">${Array.from({ length: 9 }, (_, i) => html`<input type="radio" name="anchor" aria-label="Anchor ${i + 1}" .checked=${i === 4}>`)}</div>
        <number-box class="rotate" label="Rotate" value="0.00"></number-box>
        <span class="divider"></span>
        <div class="units">
          <label><input type="radio" name="unit" .checked=${true}>mm</label>
          <label><input type="radio" name="unit">in</label>
        </div>
        <span class="dots second"></span>
        <div class="text">
          <div class="row">
            <label for="Font">Font</label>${this.pick("Font", ["Arial"], "family")}
            <number-box label="Height" value="15.05"></number-box>
          </div>
          <div class="flags">
            ${this.flag("Bold")}${this.flag("Upper Case")}${this.flag("Welded", true)}
            ${this.flag("Italic")}${this.flag("Distort")}
          </div>
        </div>
        <div class="spacing">
          <number-box label="HSpace" value="0.00"></number-box>
          <label for="AlignX">Align X</label>${this.pick("AlignX", ["Left"])}
          ${this.pick("Mode", ["Normal"])}
          <number-box label="VSpace" value="0.00"></number-box>
          <label for="AlignY">Align Y</label>${this.pick("AlignY", ["Middle"])}
          <number-box class="last" label="Offset" value="0"></number-box>
        </div>
      </div>
      <div class="main">
        <aside class="side">${this.strip(TOOLS, "select")}</aside>
        <work-area></work-area>
      </div>`;
  }
}
